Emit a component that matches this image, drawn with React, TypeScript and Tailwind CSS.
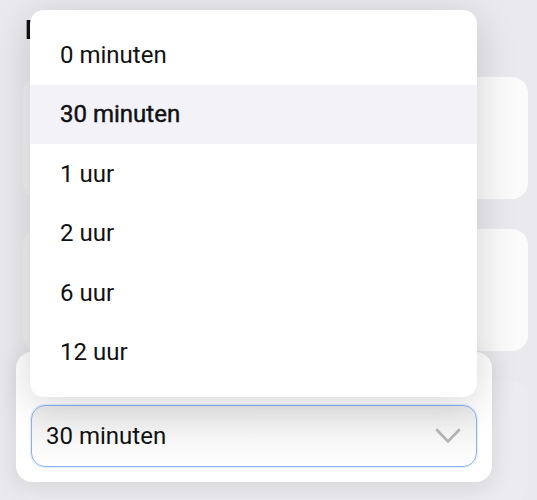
import React from "react";

const OPTIONS = ["0 minuten", "30 minuten", "1 uur", "2 uur", "6 uur", "12 uur"];
const SELECTED = "30 minuten";

function Chevron() {
	return (
		<svg width="26" height="16" viewBox="0 0 26 16" fill="none">
			<path
				d="M2 2l11 11.5L24 2"
				stroke="#b4b4b9"
				strokeWidth="2.6"
				strokeLinecap="round"
				strokeLinejoin="round"
			/>
		</svg>
	);
}

export default function App() {
	return (
		<div className="relative w-[537px] h-[500px] overflow-hidden bg-[#e9e9ee] font-['Roboto','Liberation_Sans',sans-serif] text-[#111113]">
			{/* dimmed page behind the sheet */}
			<div className="flex flex-col pl-[23px] pr-[9px] pt-[14px] blur-[0.6px]">
				<h1 className="ml-[2px] text-[26px] leading-[32px] font-bold">Duur</h1>
				<div className="mt-[31px] h-[122px] rounded-2xl bg-gradient-to-r from-[#efeff2] to-[#fbfbfb]" />
				<div className="mt-[30px] h-[122px] rounded-2xl bg-gradient-to-r from-[#efeff2] to-[#fbfbfb]" />
				<div className="mt-[30px] h-[122px] rounded-2xl bg-[#ececf0]" />
			</div>

			{/* lifted select card */}
			<div className="absolute left-[16px] top-[352px] w-[476px] h-[130px] rounded-2xl bg-white shadow-[0_6px_24px_rgba(0,0,0,0.10)] px-[15px] pt-[53px]">
				<button className="w-full h-[62px] flex items-center justify-between rounded-[14px] border border-[#8db3f6] bg-gradient-to-b from-[#ececec] to-white pl-[14px] pr-[15px] shadow-[0_0_0_1px_rgba(141,179,246,0.25)]">
					<span className="text-[24px] leading-none">{SELECTED}</span>
					<Chevron />
				</button>
			</div>

			{/* dropdown menu */}
			<div className="absolute left-[30px] top-[10px] w-[447px] h-[387px] rounded-[14px] bg-white py-[15px] shadow-[0_8px_40px_rgba(0,0,0,0.16)]">
				{OPTIONS.map((opt) => (
					<div
						key={opt}
						className={
							opt === SELECTED
								? "h-[59.5px] flex items-center px-[30px] bg-[#f3f2f8] text-[24px] [-webkit-text-stroke:0.45px_#111113]"
								: "h-[59.5px] flex items-center px-[30px] text-[24px]"
						}
					>
						{opt}
					</div>
				))}
			</div>
		</div>
	);
}
